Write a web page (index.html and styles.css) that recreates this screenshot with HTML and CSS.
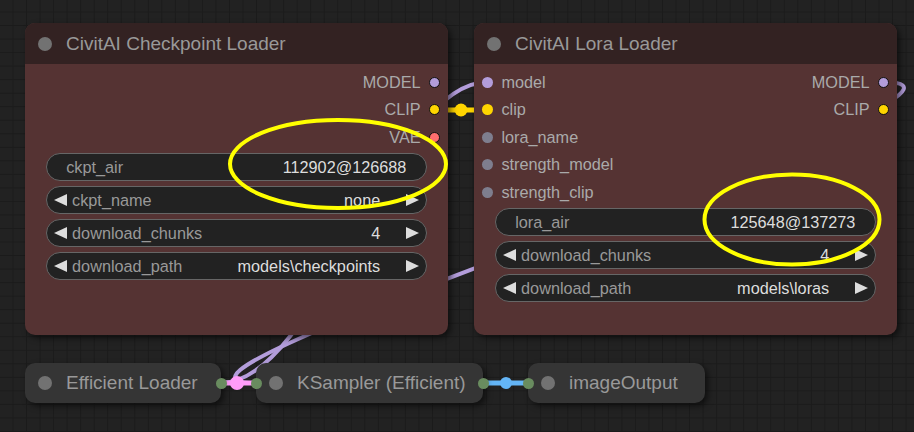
FILE: index.html
```html
<!DOCTYPE html>
<html>
<head>
<meta charset="utf-8">
<link rel="stylesheet" href="styles.css">
</head>
<body>
<div class="canvas">
  <svg class="links" width="914" height="432" viewBox="0 0 914 432">
    <path class="link purple" d="M220 383 C321 383 387 82 488 82"/>
    <path class="link purple" d="M883 82 C1057 82 82 383 256 383"/>
    <line class="link yellow" x1="434" y1="110" x2="488" y2="110"/>
    <circle class="yellow-fill" cx="461" cy="110" r="6.5"/>
    <line class="link pink" x1="220" y1="383" x2="256" y2="383"/>
    <circle class="pink-fill" cx="237" cy="383" r="7"/>
    <line class="link blue" x1="483" y1="383" x2="528" y2="383"/>
    <circle class="blue-fill" cx="506" cy="383" r="6"/>
  </svg>

  <div class="node node-ckpt">
    <div class="title"><span class="tdot"></span><span class="ttext">CivitAI Checkpoint Loader</span></div>
    <div class="body">
      <div class="slots">
        <div class="row"><span></span><span class="out">MODEL<i class="dot outdot c-model"></i></span></div>
        <div class="row"><span></span><span class="out">CLIP<i class="dot outdot c-clip"></i></span></div>
        <div class="row"><span></span><span class="out">VAE<i class="dot outdot c-vae"></i></span></div>
      </div>
      <div class="widgets">
        <div class="widget text"><span class="wlabel">ckpt_air</span><span class="wvalue">112902@126688</span></div>
        <div class="widget combo"><i class="arrow left"></i><span class="wlabel">ckpt_name</span><span class="wvalue">none</span><i class="arrow right"></i></div>
        <div class="widget combo"><i class="arrow left"></i><span class="wlabel">download_chunks</span><span class="wvalue">4</span><i class="arrow right"></i></div>
        <div class="widget combo"><i class="arrow left"></i><span class="wlabel">download_path</span><span class="wvalue">models\checkpoints</span><i class="arrow right"></i></div>
      </div>
    </div>
  </div>

  <div class="node node-lora">
    <div class="title"><span class="tdot"></span><span class="ttext">CivitAI Lora Loader</span></div>
    <div class="body">
      <div class="slots">
        <div class="row"><span class="in"><i class="dot c-model"></i>model</span><span class="out">MODEL<i class="dot outdot c-model"></i></span></div>
        <div class="row"><span class="in"><i class="dot c-clip"></i>clip</span><span class="out">CLIP<i class="dot outdot c-clip"></i></span></div>
        <div class="row"><span class="in"><i class="dot c-widget"></i>lora_name</span><span></span></div>
        <div class="row"><span class="in"><i class="dot c-widget"></i>strength_model</span><span></span></div>
        <div class="row"><span class="in"><i class="dot c-widget"></i>strength_clip</span><span></span></div>
      </div>
      <div class="widgets">
        <div class="widget text"><span class="wlabel">lora_air</span><span class="wvalue">125648@137273</span></div>
        <div class="widget combo"><i class="arrow left"></i><span class="wlabel">download_chunks</span><span class="wvalue">4</span><i class="arrow right"></i></div>
        <div class="widget combo"><i class="arrow left"></i><span class="wlabel">download_path</span><span class="wvalue">models\loras</span><i class="arrow right"></i></div>
      </div>
    </div>
  </div>

  <div class="cnode cn-eff"><span class="tdot"></span><span class="ttext">Efficient Loader</span><i class="cslot cs-right"></i></div>
  <div class="cnode cn-ks"><i class="cslot cs-left"></i><span class="tdot"></span><span class="ttext">KSampler (Efficient)</span><i class="cslot cs-right"></i></div>
  <div class="cnode cn-img"><i class="cslot cs-left"></i><span class="tdot"></span><span class="ttext">imageOutput</span></div>

  <svg class="marks" width="914" height="432" viewBox="0 0 914 432">
    <ellipse cx="338" cy="164" rx="108" ry="44"/>
    <ellipse cx="792" cy="219.5" rx="87.5" ry="45"/>
  </svg>
</div>
</body>
</html>
```

FILE: styles.css
```css
html, body {
  margin: 0;
  padding: 0;
  background: #222;
}

.canvas {
  position: relative;
  width: 914px;
  height: 432px;
  overflow: hidden;
  background-color: #222;
  background-image:
    linear-gradient(#1b1b1b 1px, transparent 1px),
    linear-gradient(90deg, #1b1b1b 1px, transparent 1px);
  background-size: 13.54px 13.54px;
  background-position: 12.5px 11.5px;
  font-family: "Liberation Sans", Arial, sans-serif;
}

.links, .marks {
  position: absolute;
  left: 0;
  top: 0;
}

.marks {
  pointer-events: none;
}

.link {
  fill: none;
  stroke-linecap: round;
}

.purple { stroke: #b39ddb; stroke-width: 4; }
.yellow { stroke: #ffd500; stroke-width: 5; }
.pink { stroke: #ff9cf9; stroke-width: 5; }
.blue { stroke: #64b5f6; stroke-width: 5; }
.yellow-fill { fill: #ffd500; }
.pink-fill { fill: #ff9cf9; }
.blue-fill { fill: #64b5f6; }

.marks ellipse {
  fill: none;
  stroke: #ffff00;
  stroke-width: 4;
}

/* expanded nodes */
.node {
  position: absolute;
  top: 23px;
  height: 312px;
  background: #553333;
  border-radius: 10px;
  box-shadow: 3px 3px 6px rgba(0, 0, 0, 0.55);
  display: flex;
  flex-direction: column;
  overflow: hidden;
}

.node-ckpt { left: 25px; width: 423px; }
.node-lora { left: 474px; width: 423px; }

.title {
  height: 41px;
  flex: none;
  background: #332222;
  display: flex;
  align-items: center;
  color: #999;
  font-size: 19px;
}

.tdot {
  flex: none;
  width: 14px;
  height: 14px;
  border-radius: 50%;
  background: #727272;
  margin-left: 13px;
}

.ttext {
  margin-left: 14px;
  white-space: nowrap;
}

.body {
  padding-top: 4.25px;
  display: flex;
  flex-direction: column;
}

.row {
  height: 27.5px;
  display: flex;
  align-items: center;
  justify-content: space-between;
  padding: 0 8px;
  color: #aaa;
  font-size: 16.25px;
}

.in, .out {
  display: flex;
  align-items: center;
  gap: 8.4px;
  white-space: nowrap;
}

.dot {
  display: block;
  width: 11px;
  height: 11px;
  border-radius: 50%;
  box-sizing: border-box;
}

.outdot {
  border: 1.5px solid #111;
}

.c-model { background: #b39ddb; }
.c-clip { background: #ffd500; }
.c-vae { background: #ff6e6e; }
.c-widget { background: #7e7e8e; }

.widgets {
  margin-top: 2.5px;
  padding: 0 20.6px;
  display: flex;
  flex-direction: column;
  gap: 5.5px;
}

.widget {
  height: 27.5px;
  box-sizing: border-box;
  border: 1px solid #666;
  border-radius: 14px;
  background: #222;
  display: flex;
  align-items: center;
  font-size: 16.25px;
  white-space: nowrap;
}

.wlabel {
  color: #999;
  flex: 1;
}

.wvalue {
  color: #ddd;
}

.widget.text .wlabel { padding-left: 19.6px; }
.widget.text .wvalue { padding-right: 20px; }

.widget.combo .wlabel { padding-left: 5.3px; }
.widget.combo .wvalue { padding-right: 26px; }

.arrow {
  display: block;
  width: 0;
  height: 0;
  border-top: 6.9px solid transparent;
  border-bottom: 6.9px solid transparent;
  flex: none;
}

.arrow.left {
  margin-left: 7.2px;
  border-right: 13.6px solid #ddd;
}

.arrow.right {
  margin-right: 7.2px;
  border-left: 13.6px solid #ddd;
}

/* collapsed nodes */
.cnode {
  position: absolute;
  top: 363px;
  height: 40px;
  background: #353535;
  border-radius: 10px;
  box-shadow: 3px 3px 6px rgba(0, 0, 0, 0.55);
  display: flex;
  align-items: center;
  color: #999;
  font-size: 19px;
}

.cn-eff { left: 25px; width: 196px; }
.cn-ks { left: 256px; width: 227px; }
.cn-img { left: 528px; width: 177px; }

.cslot {
  position: absolute;
  top: 14.5px;
  width: 11px;
  height: 11px;
  border-radius: 50%;
  background: #698c5f;
}

.cs-right { right: -5.5px; }
.cs-left { left: -5.5px; }
```
